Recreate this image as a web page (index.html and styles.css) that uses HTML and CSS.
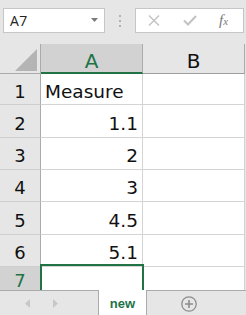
FILE: index.html
```html
<!DOCTYPE html>
<html>
<head>
<meta charset="utf-8">
<link rel="stylesheet" href="styles.css">
</head>
<body>
<div class="app">
  <div class="toolbar">
    <div class="namebox">
      <span class="ref">A7</span>
      <svg class="caret" width="7" height="4" viewBox="0 0 7 4"><path d="M0 0H7L3.5 4Z" fill="#7a7a7a"/></svg>
    </div>
    <div class="dots"><i></i><i></i><i></i></div>
    <div class="fbox">
      <svg class="ico" width="12" height="11" viewBox="0 0 12 11"><path d="M1 0.5L11 10.5M11 0.5L1 10.5" stroke="#c2c2c2" stroke-width="1.4" fill="none"/></svg>
      <svg class="ico" width="14" height="11" viewBox="0 0 14 11"><path d="M1 5.5L5 9.5L13 1" stroke="#c2c2c2" stroke-width="2" fill="none"/></svg>
      <span class="fx">f<span class="fxs">x</span></span>
    </div>
  </div>
  <div class="sheet">
    <div class="grid">
      <div class="corner"><span class="tri"></span></div>
      <div class="colh sel">A</div>
      <div class="colh">B</div>

      <div class="rowh">1</div><div class="cell">Measure</div><div class="cell"></div>
      <div class="rowh">2</div><div class="cell num">1.1</div><div class="cell"></div>
      <div class="rowh">3</div><div class="cell num">2</div><div class="cell"></div>
      <div class="rowh">4</div><div class="cell num">3</div><div class="cell"></div>
      <div class="rowh">5</div><div class="cell num">4.5</div><div class="cell"></div>
      <div class="rowh">6</div><div class="cell num">5.1</div><div class="cell"></div>
      <div class="rowh sel last">7</div><div class="cell active last"></div><div class="cell last"></div>
    </div>
  </div>
  <div class="tabs">
    <div class="nav">
      <svg width="5" height="9" viewBox="0 0 5 9"><path d="M5 0V9L0 4.5Z" fill="#c8c8c8"/></svg>
      <svg width="5" height="9" viewBox="0 0 5 9"><path d="M0 0V9L5 4.5Z" fill="#c8c8c8"/></svg>
    </div>
    <div class="tab">new</div>
    <div class="add">
      <svg width="16" height="16" viewBox="0 0 16 16"><circle cx="8" cy="8" r="7.2" stroke="#8c8c8c" stroke-width="1.3" fill="none"/><path d="M8 4V12M4 8H12" stroke="#8c8c8c" stroke-width="1.6"/></svg>
    </div>
  </div>
</div>
</body>
</html>
```
FILE: styles.css
```css
* { box-sizing: border-box; }
html, body { margin: 0; padding: 0; }
body {
  background: #e6e6e6;
  font-family: "DejaVu Sans", sans-serif;
  width: 246px;
  height: 315px;
  overflow: hidden;
}
.app {
  display: flex;
  flex-direction: column;
  height: 315px;
}
.toolbar {
  height: 44px;
  flex: none;
  display: flex;
  align-items: flex-start;
  padding: 8px 0 0 3px;
}
.namebox {
  width: 102px;
  height: 25px;
  background: #fff;
  border: 1px solid #c6c6c6;
  display: flex;
  align-items: center;
  justify-content: space-between;
  padding: 0 6px 0 6px;
}
.ref {
  font-family: "Open Sans", sans-serif;
  font-size: 14px;
  color: #222;
  letter-spacing: 0.4px;
}
.caret { margin-top: -2px; }
.dots {
  width: 30px;
  height: 25px;
  display: flex;
  flex-direction: column;
  align-items: center;
  justify-content: center;
  gap: 3px;
}
.dots i {
  display: block;
  width: 2px;
  height: 2px;
  background: #b2b2b2;
}
.fbox {
  width: 109px;
  height: 25px;
  background: #fff;
  border: 1px solid #c6c6c6;
  display: flex;
  align-items: center;
  padding-left: 12px;
}
.ico { flex: none; }
.ico + .ico { margin-left: 23px; }
.fx {
  margin-left: 22px;
  font-family: "Liberation Serif", serif;
  font-style: italic;
  font-size: 15px;
  color: #7a7a7a;
}
.fxs { font-size: 11px; }

.sheet {
  flex: 1;
  overflow: hidden;
}
.grid {
  display: grid;
  grid-template-columns: 41px 102px 102px;
  grid-template-rows: 30px 31px 33px 32px 32px 33px 32px 23px;
}
.corner {
  background: #e6e6e6;
  border-right: 1px solid #ababab;
  border-bottom: 1px solid #ababab;
  position: relative;
}
.tri {
  position: absolute;
  right: 3px;
  bottom: 2px;
  width: 0;
  height: 0;
  border-left: 22px solid transparent;
  border-bottom: 22px solid #b4b4b4;
}
.colh {
  background: #e6e6e6;
  border-right: 1px solid #ababab;
  border-bottom: 1px solid #9e9e9e;
  display: flex;
  align-items: center;
  justify-content: center;
  font-size: 20px;
  color: #111;
  padding-top: 5px;
}
.colh.sel {
  background: #d2d2d2;
  color: #217346;
  border-bottom: 2px solid #217346;
}
.rowh {
  background: #e6e6e6;
  border-right: 1px solid #ababab;
  border-bottom: 1px solid #cfcfcf;
  display: flex;
  align-items: center;
  justify-content: center;
  font-size: 18px;
  color: #111;
  padding-top: 4px;
}
.rowh.sel {
  background: #d2d2d2;
  color: #217346;
}
.cell {
  background: #fff;
  border-right: 1px solid #d4d4d4;
  border-bottom: 1px solid #d4d4d4;
  display: flex;
  align-items: center;
  padding: 4px 4px 0;
  font-size: 18.5px;
  color: #111;
}
.last { border-bottom: 0; }
.cell.num { justify-content: flex-end; }
.cell.active { position: relative; }
.cell.active::after {
  content: "";
  position: absolute;
  left: -1px;
  top: -3px;
  right: -2px;
  bottom: 0;
  border: 2px solid #217346;
  border-bottom: 0;
}

.tabs {
  height: 25px;
  flex: none;
  background: #e6e6e6;
  border-top: 1px solid #ababab;
  display: flex;
  align-items: stretch;
  position: relative;
}
.nav {
  width: 98px;
  display: flex;
  align-items: center;
  padding-left: 25px;
  gap: 23px;
}
.tab {
  width: 49px;
  margin-top: -1px;
  background: #fff;
  border-left: 1px solid #ababab;
  border-right: 1px solid #ababab;
  display: flex;
  align-items: center;
  justify-content: center;
  font-family: "Liberation Sans", sans-serif;
  font-weight: bold;
  font-size: 13px;
  color: #217346;
  padding-top: 2px;
}
.add {
  display: flex;
  align-items: center;
  padding-left: 34px;
  padding-top: 1px;
}
```
